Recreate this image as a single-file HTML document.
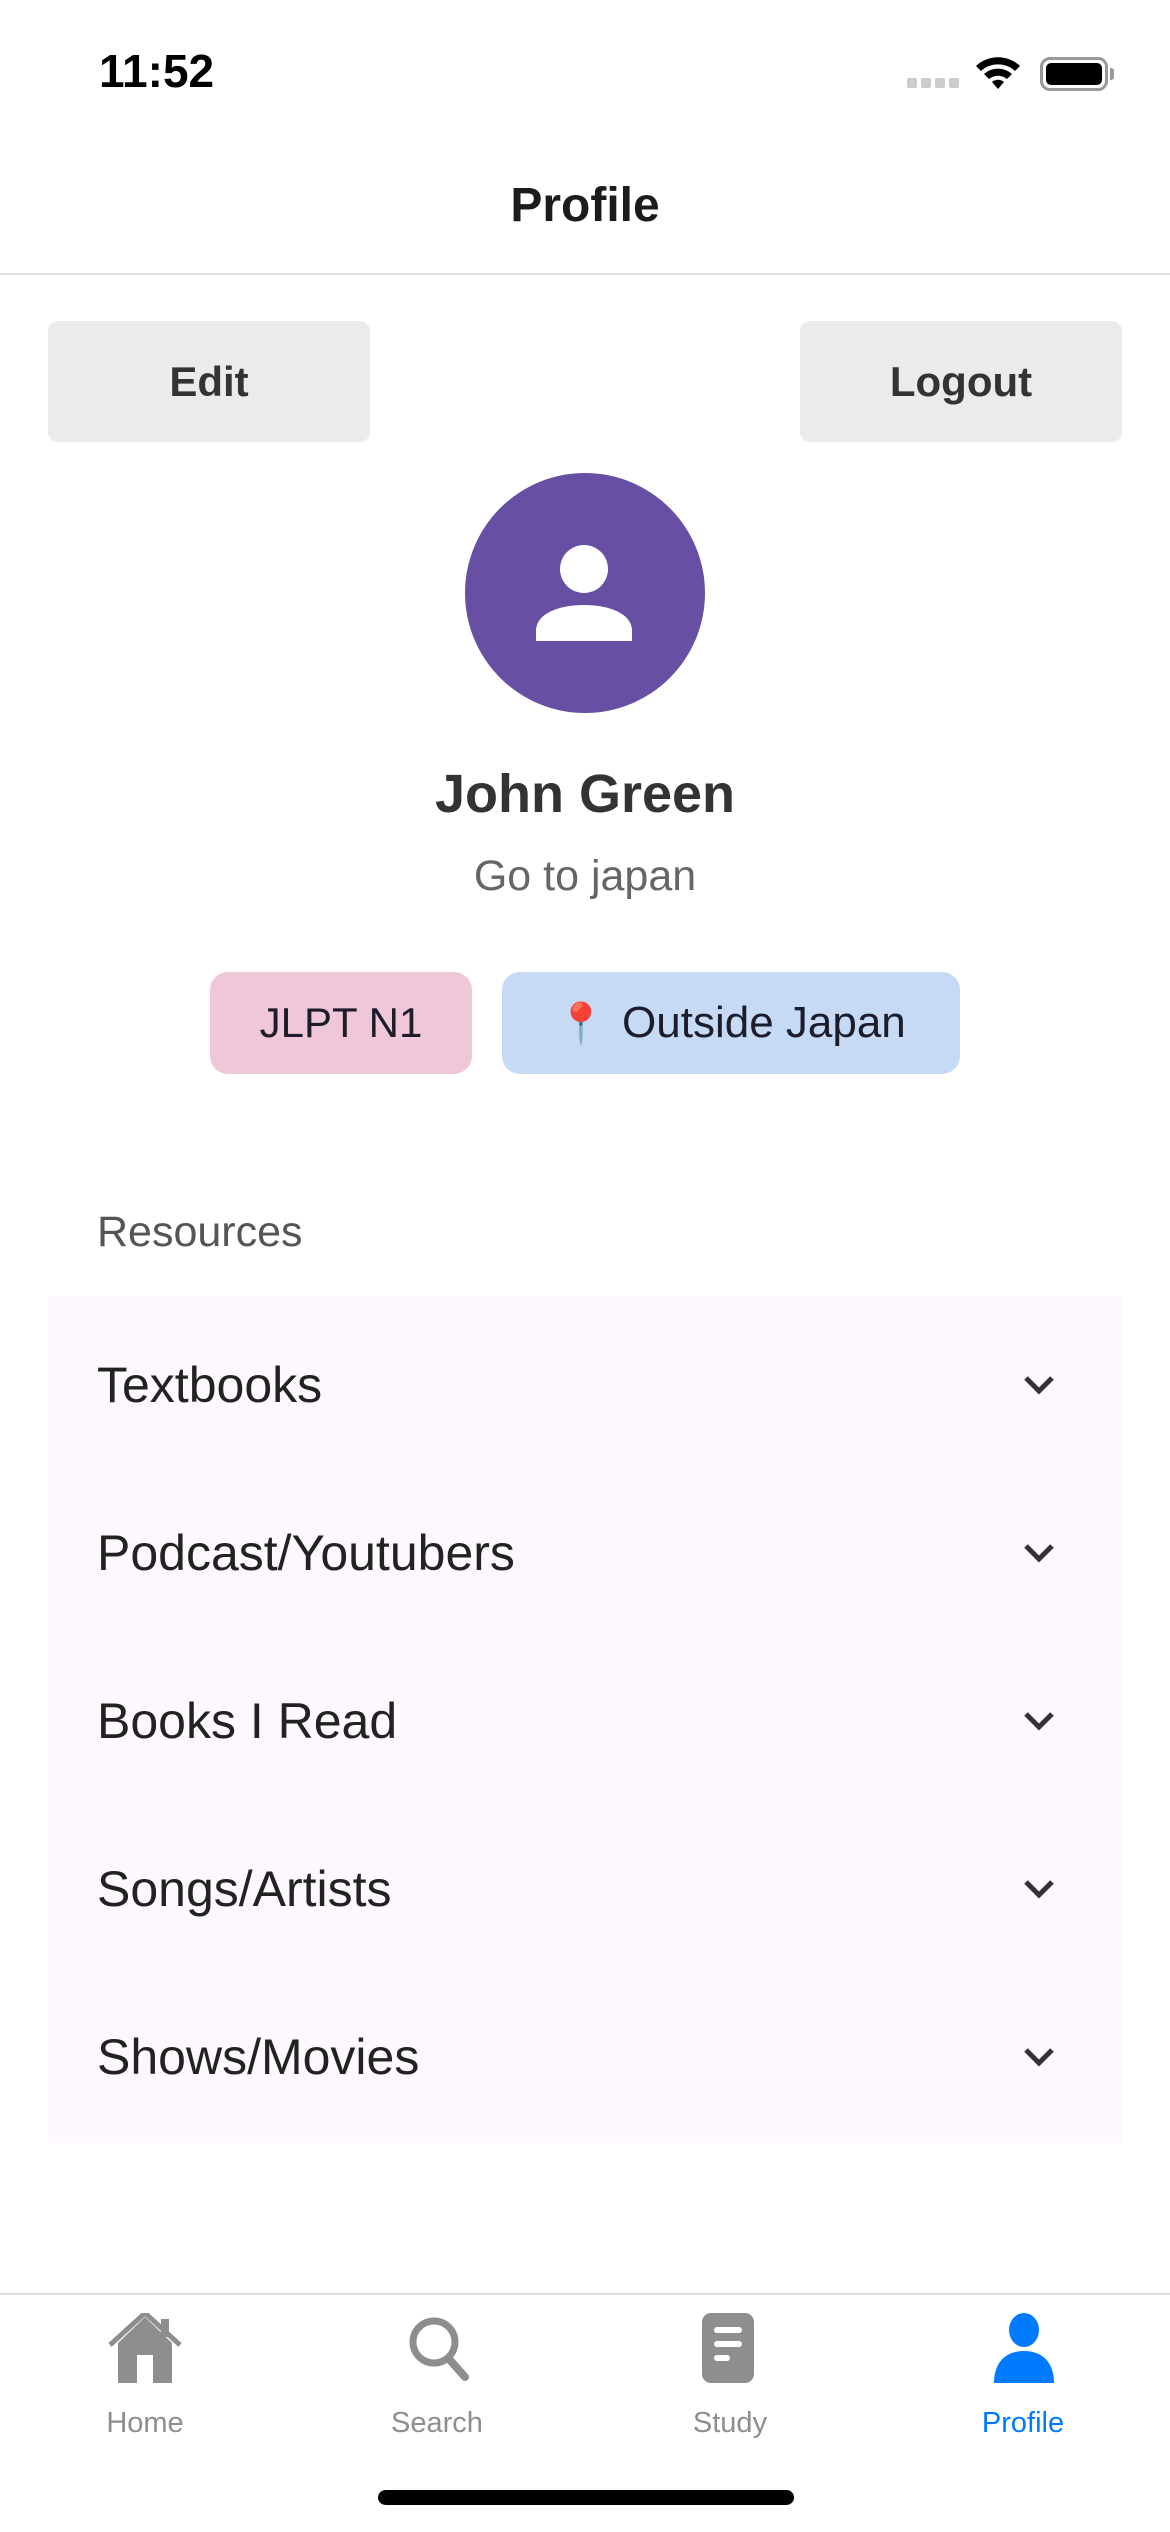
<!DOCTYPE html>
<html><head><meta charset="utf-8"><style>
*{margin:0;padding:0;box-sizing:border-box}
body{width:1170px;height:2532px;background:#fff;font-family:"Liberation Sans",sans-serif;position:relative;overflow:hidden;color:#222}
.a{position:absolute}
.btn{position:absolute;background:#ebebeb;border-radius:10px;font-weight:bold;font-size:42px;color:#333;display:flex;align-items:center;justify-content:center}
.chip{position:absolute;border-radius:18px;font-size:42px;color:#1c1c2a;display:flex;align-items:center;justify-content:center}
.row{position:absolute;left:97px;font-size:50px;color:#222;height:60px;line-height:60px}
.chev{position:absolute;left:1022px}
.tab{position:absolute;top:2407px;font-size:29px;color:#8e8e8e;width:200px;text-align:center}
</style></head><body>
<div class="a" style="left:99px;top:44px;font-size:46px;font-weight:bold;color:#000">11:52</div>
<div class="a" style="left:907px;top:78px;width:52px;height:10px;display:flex;gap:4px">
<span style="width:10px;height:10px;border-radius:2px;background:#ccc"></span><span style="width:10px;height:10px;border-radius:2px;background:#ccc"></span><span style="width:10px;height:10px;border-radius:2px;background:#ccc"></span><span style="width:10px;height:10px;border-radius:2px;background:#ccc"></span></div>
<svg class="a" style="left:972px;top:52px" width="52" height="40" viewBox="0 0 52 40"><path d="M4 14 A32 32 0 0 1 48 14 L43 19 A25 25 0 0 0 9 19Z M12 22 A21 21 0 0 1 40 22 L35 27 A14 14 0 0 0 17 27Z M20 30 A9 9 0 0 1 32 30 L26 37Z" fill="#000"/></svg>
<div class="a" style="left:1040px;top:57px;width:68px;height:34px;border:3px solid #999;border-radius:10px;padding:3px"><div style="width:100%;height:100%;background:#000;border-radius:5px"></div></div>
<div class="a" style="left:1110px;top:68px;width:4px;height:12px;background:#999;border-radius:0 3px 3px 0"></div>
<div class="a" style="left:0;top:178px;width:1170px;text-align:center;font-size:48px;font-weight:bold;color:#1c1c1c">Profile</div>
<div class="a" style="left:0;top:273px;width:1170px;height:2px;background:#e0e0e0"></div>
<div class="btn" style="left:48px;top:321px;width:322px;height:121px">Edit</div>
<div class="btn" style="left:800px;top:321px;width:322px;height:121px">Logout</div>
<div class="a" style="left:465px;top:473px;width:240px;height:240px;border-radius:50%;background:#6750a4"></div>
<svg class="a" style="left:535px;top:545px" width="100" height="100" viewBox="0 0 100 100"><circle cx="49" cy="24" r="24" fill="#fff"/><path d="M1 96 V86 C1 68 25 60 49 60 C73 60 97 68 97 86 V96Z" fill="#fff"/></svg>
<div class="a" style="left:0;top:763px;width:1170px;text-align:center;font-size:54px;font-weight:bold;color:#333">John Green</div>
<div class="a" style="left:0;top:852px;width:1170px;text-align:center;font-size:43px;color:#666">Go to japan</div>
<div class="chip" style="left:210px;top:972px;width:262px;height:102px;background:#f0c6d9">JLPT N1</div>
<div class="chip" style="left:502px;top:972px;width:458px;height:102px;background:#c6d9f5;font-size:44px"><span style="color:#d22;font-size:40px;margin-right:16px">📍</span>Outside Japan</div>
<div class="a" style="left:97px;top:1208px;font-size:43px;color:#555">Resources</div>
<div class="a" style="left:48px;top:1296px;width:1075px;height:847px;background:#fdf8fe"></div>
<div class="row" style="top:1355px">Textbooks</div>
<div class="row" style="top:1523px">Podcast/Youtubers</div>
<div class="row" style="top:1691px">Books I Read</div>
<div class="row" style="top:1859px">Songs/Artists</div>
<div class="row" style="top:2027px">Shows/Movies</div>
<svg class="chev" style="top:1373px" width="34" height="24" viewBox="0 0 34 24"><path d="M4 5 L17 18 L30 5" fill="none" stroke="#333" stroke-width="5"/></svg>
<svg class="chev" style="top:1541px" width="34" height="24" viewBox="0 0 34 24"><path d="M4 5 L17 18 L30 5" fill="none" stroke="#333" stroke-width="5"/></svg>
<svg class="chev" style="top:1709px" width="34" height="24" viewBox="0 0 34 24"><path d="M4 5 L17 18 L30 5" fill="none" stroke="#333" stroke-width="5"/></svg>
<svg class="chev" style="top:1877px" width="34" height="24" viewBox="0 0 34 24"><path d="M4 5 L17 18 L30 5" fill="none" stroke="#333" stroke-width="5"/></svg>
<svg class="chev" style="top:2045px" width="34" height="24" viewBox="0 0 34 24"><path d="M4 5 L17 18 L30 5" fill="none" stroke="#333" stroke-width="5"/></svg>
<div class="a" style="left:0;top:2293px;width:1170px;height:2px;background:#ddd"></div>
<svg class="a" style="left:108px;top:2313px" width="74" height="70" viewBox="0 0 74 70"><path d="M10 30 L37 4 L64 30 V70 H45 V42 H29 V70 H10Z" fill="#8e8e8e"/><path d="M2 32 L37 0 L72 32" fill="none" stroke="#8e8e8e" stroke-width="5"/><rect x="53" y="6" width="8" height="18" fill="#8e8e8e"/></svg>
<svg class="a" style="left:407px;top:2315px" width="66" height="66" viewBox="0 0 66 66"><circle cx="27" cy="27" r="21" fill="none" stroke="#8e8e8e" stroke-width="7"/><path d="M42 44 L58 62" stroke="#8e8e8e" stroke-width="8" stroke-linecap="round"/></svg>
<svg class="a" style="left:702px;top:2313px" width="52" height="70" viewBox="0 0 52 70"><rect x="0" y="0" width="52" height="70" rx="9" fill="#8e8e8e"/><rect x="12" y="14" width="28" height="6" rx="3" fill="#fff"/><rect x="12" y="28" width="28" height="6" rx="3" fill="#fff"/><rect x="12" y="42" width="16" height="6" rx="3" fill="#fff"/></svg>
<svg class="a" style="left:993px;top:2313px" width="62" height="70" viewBox="0 0 62 70"><ellipse cx="31" cy="17" rx="15" ry="17" fill="#007aff"/><path d="M1 70 C1 50 12 38 31 38 C50 38 61 50 61 70Z" fill="#007aff"/></svg>
<div class="tab" style="left:45px">Home</div>
<div class="tab" style="left:337px">Search</div>
<div class="tab" style="left:630px">Study</div>
<div class="tab" style="left:923px;color:#007aff">Profile</div>
<div class="a" style="left:378px;top:2490px;width:416px;height:15px;background:#000;border-radius:8px"></div>
</body></html>
